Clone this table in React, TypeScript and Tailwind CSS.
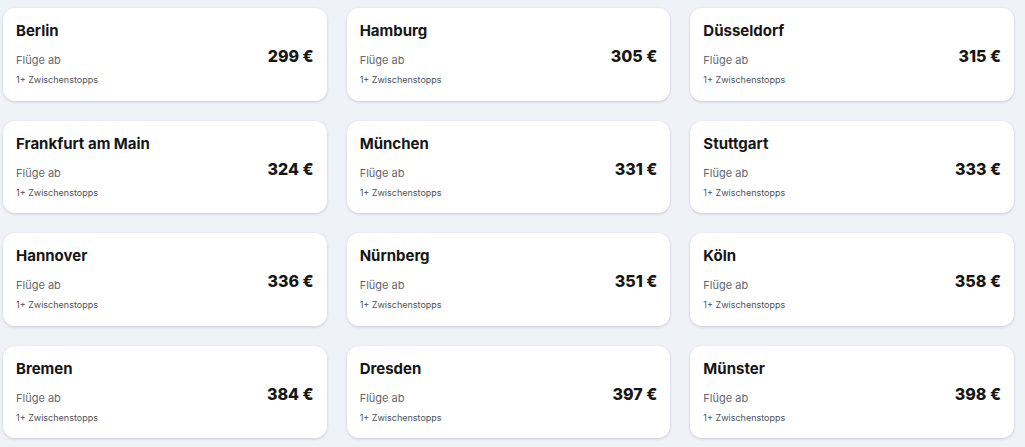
import React from "react";

// Flight destinations with lowest price
const destinations = [
  { city: "Berlin", price: 299 },
  { city: "Hamburg", price: 305 },
  { city: "Düsseldorf", price: 315 },
  { city: "Frankfurt am Main", price: 324 },
  { city: "München", price: 331 },
  { city: "Stuttgart", price: 333 },
  { city: "Hannover", price: 336 },
  { city: "Nürnberg", price: 351 },
  { city: "Köln", price: 358 },
  { city: "Bremen", price: 384 },
  { city: "Dresden", price: 397 },
  { city: "Münster", price: 398 },
];

const DestinationCard = ({ city, price }: { city: string; price: number }) => (
  <div className="h-[92.5px] bg-white rounded-xl shadow-[0_1px_3px_rgba(20,30,50,0.18)] pl-[13px] pr-[13px] pt-[11px] flex flex-col">
    <h3 className="text-[15px] leading-6 font-bold text-[#161616]">{city}</h3>
    <div className="mt-[1px] flex items-start justify-between">
      <span className="pt-2 text-[11px] leading-4 text-[#62676e]">Flüge ab</span>
      <span className="text-base leading-6 font-extrabold text-[#161616]">{price} €</span>
    </div>
    <span className="mt-[5px] text-[9px] leading-[14px] text-[#4d5258]">1+ Zwischenstopps</span>
  </div>
);

const App = () => {
  return (
    <div
      className="w-[1025px] h-[447px] bg-[#eff2f7] pl-[3px] pr-[11px] pt-2 overflow-hidden"
      style={{ fontFamily: "Inter, 'Noto Sans', sans-serif" }}
    >
      <div className="grid grid-cols-3 gap-x-5 gap-y-5">
        {destinations.map((d) => (
          <DestinationCard key={d.city} city={d.city} price={d.price} />
        ))}
      </div>
    </div>
  );
};

export default App;
